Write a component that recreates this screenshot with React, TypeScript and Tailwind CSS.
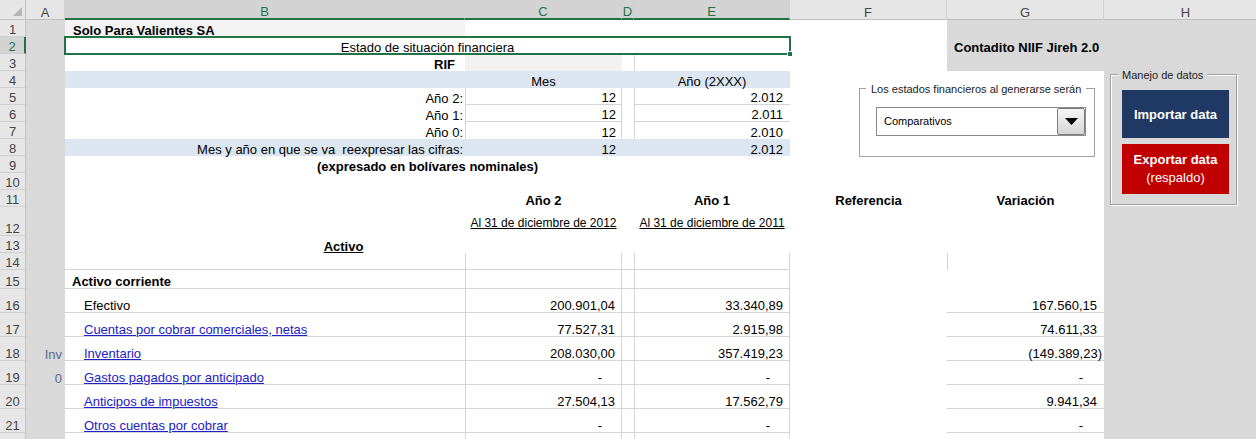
import type { ReactNode } from "react";

type Line = {
  label: string;
  link?: boolean;
  a?: string;
  c: string;
  e: string;
  g: string;
};

const lines: Line[] = [
  { label: "Efectivo", c: "200.901,04", e: "33.340,89", g: "167.560,15" },
  { label: "Cuentas por cobrar comerciales, netas", link: true, c: "77.527,31", e: "2.915,98", g: "74.611,33" },
  { label: "Inventario", link: true, a: "Inv", c: "208.030,00", e: "357.419,23", g: "(149.389,23)" },
  { label: "Gastos pagados por anticipado", link: true, a: "0", c: "-", e: "-", g: "-" },
  { label: "Anticipos de impuestos", link: true, c: "27.504,13", e: "17.562,79", g: "9.941,34" },
  { label: "Otros cuentas por cobrar", link: true, c: "-", e: "-", g: "-" },
];

const years = [
  { label: "Año 2:", mes: "12", anio: "2.012" },
  { label: "Año 1:", mes: "12", anio: "2.011" },
  { label: "Año 0:", mes: "12", anio: "2.010" },
];

function Cell({ w, cls = "", children }: { w: string; cls?: string; children?: ReactNode }) {
  return <div className={`flex shrink-0 items-end whitespace-pre ${w} ${cls}`}>{children}</div>;
}

function ColHead({ w, label, sel }: { w: string; label: string; sel?: boolean }) {
  return (
    <div
      className={`flex shrink-0 items-end justify-center border-r border-r-[#d0d0d0] ${w} ${
        sel
          ? "border-b-2 border-b-[#217346] bg-[#d3d3d3] text-[#217346]"
          : "border-b border-b-[#bfbfbf] bg-[#e6e6e6] text-[#444]"
      }`}
    >
      {label}
    </div>
  );
}

function Row({
  n,
  h,
  sel,
  a,
  children,
}: {
  n?: number;
  h: string;
  sel?: boolean;
  a?: string;
  children?: ReactNode;
}) {
  return (
    <div className={`flex shrink-0 ${h}`}>
      <div
        className={`flex w-[26px] shrink-0 items-end justify-center border-b border-b-[#cfcfcf] ${
          sel
            ? "border-r-2 border-r-[#217346] bg-[#d3d3d3] text-[#217346]"
            : "border-r border-r-[#c4c4c4] bg-[#e6e6e6] text-[#444]"
        }`}
      >
        {n}
      </div>
      <div className="flex w-[39px] shrink-0 items-end justify-end bg-[#d9d9d9] pr-[3px] text-[#5b6b8a]">
        {a}
      </div>
      {children}
      <div className="w-[164px] shrink-0 bg-[#d9d9d9]" />
    </div>
  );
}

function amountPad(v: string, last?: boolean) {
  if (v === "-") return last ? "pr-[21px]" : "pr-[19px]";
  if (v.startsWith("(")) return "pr-[2px]";
  return last ? "pr-[7px]" : "pr-[6px]";
}

function LineRow({ n, line }: { n?: number; line: Line }) {
  return (
    <Row n={n} h="h-[24px]" a={line.a}>
      <Cell w="w-[400px]" cls="border-b border-[#d4d4d4] pl-[19px]">
        {line.link ? <span className="text-[#2020c8] underline">{line.label}</span> : line.label}
      </Cell>
      <Cell w="w-[157px]" cls={`justify-end border-x border-b border-[#d4d4d4] ${amountPad(line.c)}`}>
        {line.c}
      </Cell>
      <Cell w="w-[12px]" cls="border-b border-[#d4d4d4]" />
      <Cell w="w-[156px]" cls={`justify-end border-x border-b border-[#d4d4d4] ${amountPad(line.e)}`}>
        {line.e}
      </Cell>
      <Cell w="w-[157px]" />
      <Cell w="w-[157px]" cls={`justify-end border-b border-[#d4d4d4] ${amountPad(line.g, true)}`}>
        {line.g}
      </Cell>
    </Row>
  );
}

export default function App() {
  return (
    <div className="relative h-[439px] w-[1256px] overflow-hidden bg-white font-['Liberation_Sans',Arial,sans-serif] text-[13px] leading-[13px] text-black">
      {/* column headers */}
      <div className="flex h-[20px]">
        <div className="relative w-[26px] shrink-0 border-b border-r border-[#bfbfbf] bg-[#e6e6e6]">
          <svg className="absolute bottom-[3px] right-[3px]" width="9" height="9" viewBox="0 0 9 9">
            <polygon points="9,0 9,9 0,9" fill="#b5b5b5" />
          </svg>
        </div>
        <ColHead w="w-[39px]" label="A" />
        <ColHead w="w-[400px]" label="B" sel />
        <ColHead w="w-[157px]" label="C" sel />
        <ColHead w="w-[12px]" label="D" sel />
        <ColHead w="w-[156px]" label="E" sel />
        <ColHead w="w-[157px]" label="F" />
        <ColHead w="w-[157px]" label="G" />
        <ColHead w="w-[164px]" label="H" />
      </div>

      <Row n={1} h="h-[17px]">
        <Cell w="w-[400px]" cls="bg-[#f3f3f3] pl-[8px] font-bold">
          Solo Para Valientes SA
        </Cell>
        <Cell w="w-[482px]" />
        <Cell w="w-[157px]" cls="bg-[#d9d9d9]" />
      </Row>

      <Row n={2} h="h-[17px]" sel>
        <Cell w="w-[725px]" cls="justify-center">
          Estado de situación financiera
        </Cell>
        <Cell w="w-[157px]" />
        <Cell w="w-[157px]" cls="bg-[#d9d9d9] pl-[7px] font-bold">
          Contadito NIIF Jireh 2.0
        </Cell>
      </Row>

      <Row n={3} h="h-[17px]">
        <Cell w="w-[400px]" cls="justify-end pr-[10px] font-bold">
          RIF
        </Cell>
        <Cell w="w-[157px]" cls="bg-[#f2f2f2]" />
        <Cell w="w-[12px]" />
        <Cell w="w-[156px]" cls="border-l border-[#d4d4d4]" />
        <Cell w="w-[157px]" />
        <Cell w="w-[157px]" cls="bg-[#d9d9d9]" />
      </Row>

      <Row n={4} h="h-[17px]">
        <div className="flex bg-[#dce6f1]">
          <Cell w="w-[400px]" />
          <Cell w="w-[157px]" cls="justify-center">
            Mes
          </Cell>
          <Cell w="w-[12px]" />
          <Cell w="w-[156px]" cls="justify-center">
            Año (2XXX)
          </Cell>
        </div>
        <Cell w="w-[314px]" />
      </Row>

      {years.map((y, i) => (
        <Row key={y.label} n={5 + i} h="h-[17px]">
          <Cell w="w-[400px]" cls="justify-end pr-[2px]">
            {y.label}
          </Cell>
          <Cell w="w-[157px]" cls={`justify-end border-x border-[#d4d4d4] pr-[5px] ${i < 2 ? "border-b" : ""}`}>
            {y.mes}
          </Cell>
          <Cell w="w-[12px]" />
          <Cell w="w-[156px]" cls={`justify-end border-l border-[#d4d4d4] pr-[7px] ${i < 2 ? "border-b" : ""}`}>
            {y.anio}
          </Cell>
          <Cell w="w-[314px]" />
        </Row>
      ))}

      <Row n={8} h="h-[17px]">
        <div className="flex bg-[#dce6f1]">
          <Cell w="w-[400px]" cls="justify-end pr-[2px]">
            Mes y año en que se va  reexpresar las cifras:
          </Cell>
          <Cell w="w-[157px]" cls="justify-end pr-[6px]">
            12
          </Cell>
          <Cell w="w-[12px]" />
          <Cell w="w-[156px]" cls="justify-end pr-[7px]">
            2.012
          </Cell>
        </div>
        <Cell w="w-[314px]" />
      </Row>

      <Row n={9} h="h-[17px]">
        <Cell w="w-[725px]" cls="justify-center font-bold">
          (expresado en bolívares nominales)
        </Cell>
        <Cell w="w-[314px]" />
      </Row>

      <Row n={10} h="h-[17px]">
        <Cell w="w-[1039px]" />
      </Row>

      <Row n={11} h="h-[17px]">
        <Cell w="w-[400px]" />
        <Cell w="w-[157px]" cls="justify-center font-bold">
          Año 2
        </Cell>
        <Cell w="w-[12px]" />
        <Cell w="w-[156px]" cls="justify-center font-bold">
          Año 1
        </Cell>
        <Cell w="w-[157px]" cls="justify-center font-bold">
          Referencia
        </Cell>
        <Cell w="w-[157px]" cls="justify-center font-bold">
          Variación
        </Cell>
      </Row>

      <Row n={12} h="h-[29px]">
        <Cell w="w-[400px]" />
        <Cell w="w-[157px]" cls="items-center justify-center self-center pt-[3px] text-[12px] underline">
          Al 31 de diciembre de 2012
        </Cell>
        <Cell w="w-[12px]" />
        <Cell w="w-[156px]" cls="items-center justify-center self-center pt-[3px] text-[12px] underline">
          Al 31 de diciembre de 2011
        </Cell>
        <Cell w="w-[314px]" />
      </Row>

      <Row n={13} h="h-[17px]">
        <Cell w="w-[557px]" cls="justify-center font-bold underline">
          Activo
        </Cell>
        <Cell w="w-[482px]" />
      </Row>

      <Row n={14} h="h-[17px]">
        <Cell w="w-[400px]" cls="border-b border-[#d4d4d4]" />
        <Cell w="w-[157px]" cls="border-x border-b border-[#d4d4d4]" />
        <Cell w="w-[12px]" cls="border-b border-[#d4d4d4]" />
        <Cell w="w-[156px]" cls="border-x border-b border-[#d4d4d4]" />
        <Cell w="w-[157px]" />
        <Cell w="w-[157px]" cls="border-l border-[#d4d4d4]" />
      </Row>

      <Row n={15} h="h-[19px]">
        <Cell w="w-[400px]" cls="border-b border-[#d4d4d4] pl-[7px] font-bold">
          Activo corriente
        </Cell>
        <Cell w="w-[157px]" cls="border-x border-b border-[#d4d4d4]" />
        <Cell w="w-[12px]" cls="border-b border-[#d4d4d4]" />
        <Cell w="w-[156px]" cls="border-x border-b border-[#d4d4d4]" />
        <Cell w="w-[314px]" />
      </Row>

      {lines.map((line, i) => (
        <LineRow key={line.label} n={16 + i} line={line} />
      ))}

      {/* row 22, only its top edge is in view */}
      <LineRow line={{ label: "", c: "", e: "", g: "" }} />

      {/* selection on B2:E2 */}
      <div className="pointer-events-none absolute left-[64px] top-[36px] h-[19px] w-[727px] border-2 border-[#217346]">
        <div className="absolute bottom-[-4px] right-[-4px] h-[6px] w-[6px] border border-white bg-[#217346]" />
      </div>

      {/* combo group */}
      <div className="absolute left-[859px] top-[88px] h-[69px] w-[236px] border border-[#a0a0a0] bg-white text-[11px] text-[#222]">
        <span className="absolute left-[6px] top-[-6px] bg-white px-[5px] leading-[13px]">
          Los estados financieros al generarse serán
        </span>
        <div className="absolute left-[16px] top-[18px] flex h-[29px] w-[210px] items-center border border-[#8a8a8a] bg-white">
          <span className="flex-1 pl-[7px] text-black">Comparativos</span>
          <div className="flex h-[27px] w-[28px] items-center justify-center rounded-[2px] border border-[#7d7d7d] bg-gradient-to-b from-[#f6f6f6] to-[#d6d6d6]">
            <svg width="13" height="7" viewBox="0 0 13 7">
              <path d="M0 0h13L6.5 7z" fill="#000" />
            </svg>
          </div>
        </div>
      </div>

      {/* data buttons group */}
      <div className="absolute left-[1110px] top-[74px] h-[131px] w-[127px] border border-[#a0a0a0] shadow-[inset_1px_1px_0_#fff,1px_1px_0_#fff]">
        <span className="absolute left-[7px] top-[-6px] bg-[#d9d9d9] px-[4px] text-[11px] leading-[13px] text-[#222]">
          Manejo de datos
        </span>
        <div className="flex flex-col gap-[6px] pl-[11px] pt-[15px]">
          <button className="flex h-[48px] w-[107px] items-center justify-center bg-[#1f3864] font-bold text-white">
            Importar data
          </button>
          <button className="flex h-[50px] w-[107px] flex-col items-center justify-center bg-[#c00000] leading-[18px] text-white">
            <span className="font-bold">Exportar data</span>
            <span>(respaldo)</span>
          </button>
        </div>
      </div>
    </div>
  );
}
